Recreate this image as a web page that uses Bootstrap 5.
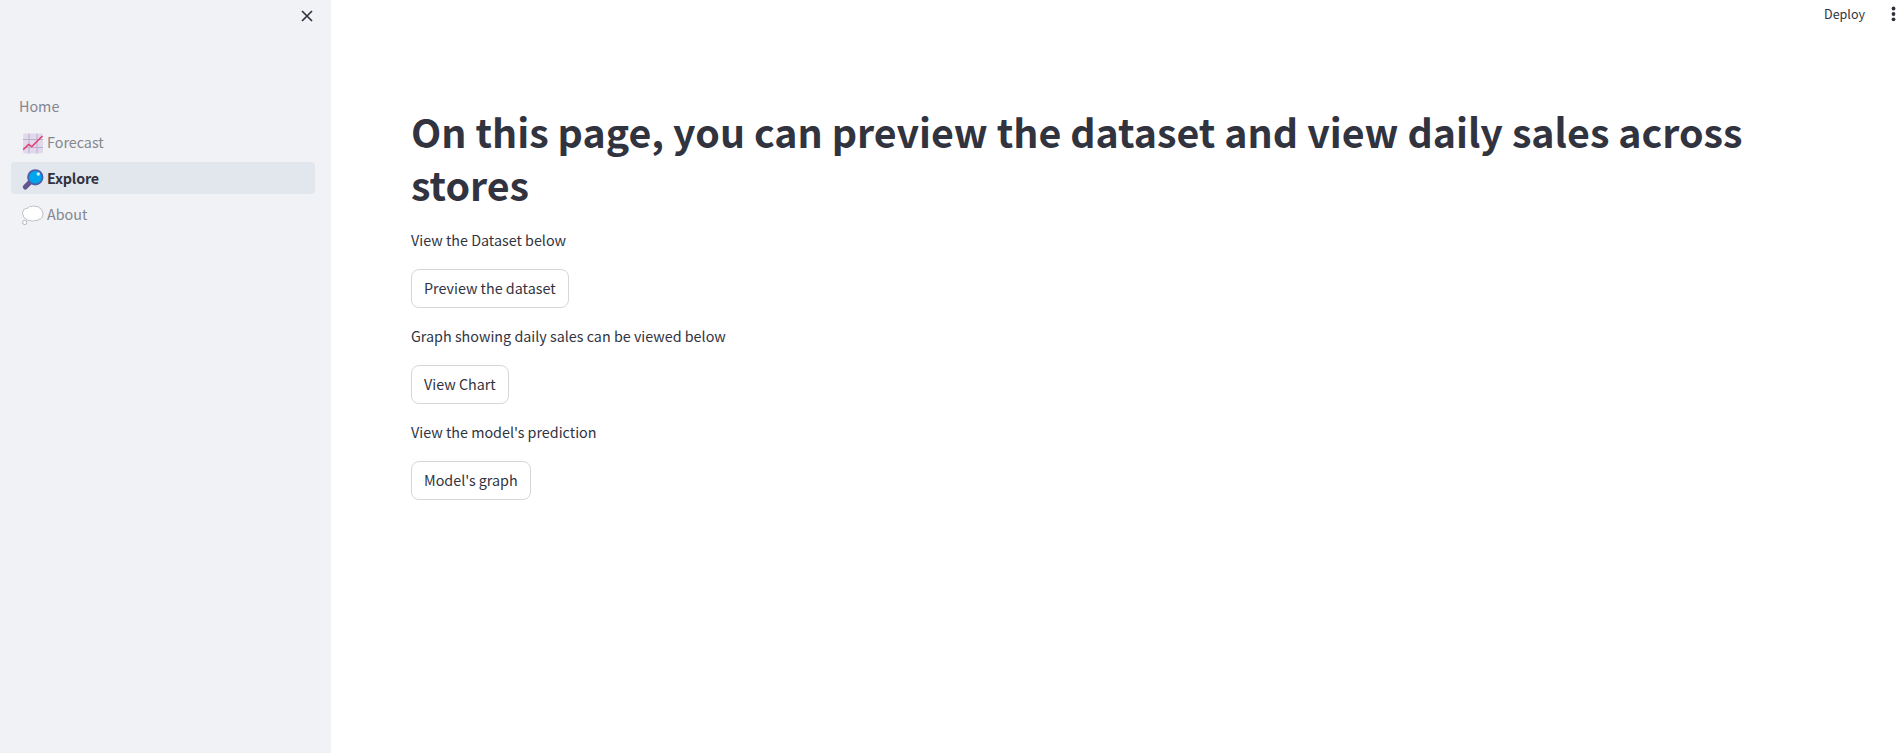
<!DOCTYPE html>
<html lang="en">
<head>
<meta charset="utf-8">
<meta name="viewport" content="width=device-width, initial-scale=1">
<title>Explore</title>
<link href="https://cdn.jsdelivr.net/npm/bootstrap@5.3.0/dist/css/bootstrap.min.css" rel="stylesheet">
<style>
body{font-family:"Noto Sans CJK SC","Noto Sans",sans-serif;font-size:14.33px;line-height:24px;color:#31333f;background:#fff}
.side{width:331px;background:#f0f2f6;padding:0 16px 0 11px}
.side-top{height:90px;padding:8px 0 0 288px}
.side .nav-link{height:32px;margin-bottom:4px;padding:0 8px;border-radius:4px;color:#84868e;gap:4px}
.side .nav-link svg{margin:3px 0 0 3px}
.side .nav-link.active{background:#e2e7ee;color:#31333f;font-weight:700;letter-spacing:-.2px}
.topbar{height:96px;padding:2px 0 0}
.deploy{font-size:12.54px;margin-right:26px}
.content{padding:0 80px}
h1{font-size:39.37px!important;font-weight:700;line-height:53px;margin:8px 0 18px}
.content p{height:24px;margin:0 0 17px}
.act{display:block;height:39px;padding:0 12px 2px;margin-bottom:16px;border:1px solid #d6d6d9;border-radius:8px;font-size:14.33px;line-height:35px;color:#31333f;background:#fff}
</style>
</head>
<body>
<div class="d-flex vh-100 overflow-hidden">
  <aside class="side flex-shrink-0">
    <div class="side-top"><svg class="d-block" width="16" height="16" viewBox="0 0 16 16" aria-label="Close"><path d="M3 3l10 10M13 3L3 13" stroke="#31333f" stroke-width="1.7"/></svg></div>
    <nav class="nav flex-column">
      <a class="nav-link d-flex align-items-center" href="#">Home</a>
      <a class="nav-link d-flex align-items-center" href="#">
        <svg width="21" height="21" viewBox="0 0 21 21"><rect x="1" y=".5" width="20" height="20" rx="2" fill="#e2d8ec"/><path d="M7 .5v20M15 .5v20M1 6.500h20M1 14.500h20" stroke="#bcb0cc" stroke-width="1"/><path d="M1.200 16.700L6.500 11.400l3.400 2.200L20.400 3" fill="none" stroke="#e8386f" stroke-width="1.500"/></svg>Forecast</a>
      <a class="nav-link d-flex align-items-center active" href="#">
        <svg width="21" height="21" viewBox="-.5 0 21 21" overflow="visible"><path d="M2.800 18L8 12.800" stroke="#64548e" stroke-width="5" stroke-linecap="round"/><circle cx="12.800" cy="8.300" r="7.200" fill="#00a6ed" stroke="#4c5fa8" stroke-width="1.900"/><circle cx="15.800" cy="5" r="1.700" fill="#c9f0ff"/></svg>Explore</a>
      <a class="nav-link d-flex align-items-center" href="#">
        <svg width="21" height="21" viewBox="-.5 0 21 21" overflow="visible"><path d="M5.200 3.300C6 1.500 8 1 9.300 1.700c1-.9 3-.9 4 .1 1.500-.7 3.600 0 4.100 1.700 1.700.3 2.700 2 2.200 3.500 1.300 1 1.300 3 .1 4 .3 1.800-1.300 3.200-3 3-1 1.600-3 2-4.500 1.200-1.200 1.200-3.500 1.200-4.600.1-1.700.6-3.600-.2-4.200-1.900C1.600 13.200.5 11.700.9 10.100-.4 9-.4 7.300.8 6.300.7 4.500 2.800 2.800 5.200 3.300z" fill="#fff" stroke="#b0b0b5" stroke-width=".8"/><circle cx="2.200" cy="17.500" r="2.100" fill="#fff" stroke="#a6a6ab" stroke-width=".8"/></svg>About</a>
    </nav>
  </aside>
  <main class="flex-grow-1">
    <header class="topbar d-flex justify-content-end align-items-start">
      <span class="deploy">Deploy</span>
      <svg width="5" height="22" viewBox="0 0 5 22" aria-label="Menu"><g fill="#31333f"><circle cx="2.500" cy="6.500" r="1.900"/><circle cx="2.500" cy="12" r="1.900"/><circle cx="2.500" cy="17.300" r="1.900"/></g></svg>
    </header>
    <div class="content">
      <h1>On this page, you can preview the dataset and view daily sales across stores</h1>
      <p>View the Dataset below</p>
      <button class="btn act">Preview the dataset</button>
      <p>Graph showing daily sales can be viewed below</p>
      <button class="btn act">View Chart</button>
      <p>View the model's prediction</p>
      <button class="btn act">Model's graph</button>
    </div>
  </main>
</div>
<script src="https://cdn.jsdelivr.net/npm/bootstrap@5.3.0/dist/js/bootstrap.bundle.min.js"></script>
</body>
</html>
